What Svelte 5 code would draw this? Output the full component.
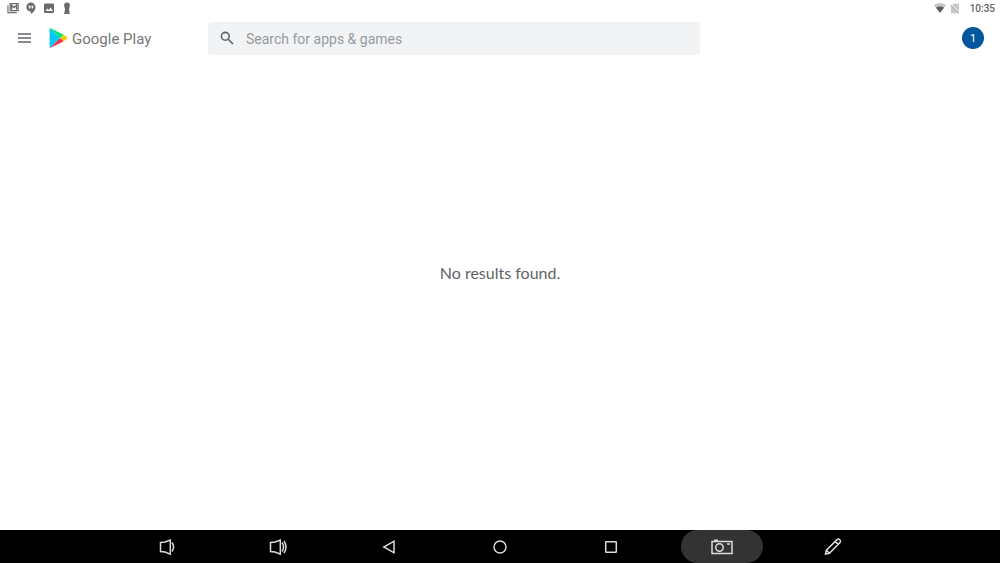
<script>
  let query = $state('');
</script>

<div class="screen">
  <div class="status">
    <div class="group notices">
      <svg width="12" height="12" viewBox="0 0 13 12" fill="none" stroke="#6b6b6b">
        <path d="M1 3v8h9.500" stroke-width="1.200" />
        <path d="M3.400 1.300h8.600v7.600H3.400z" stroke-width="1.300" />
        <path d="M5 8V3l2.700 2.500L10.400 3v5" stroke-width="1.500" />
      </svg>
      <svg width="10" height="12" viewBox="0 0 10 12">
        <path d="M5 .6a4.500 4.500 0 0 0-.3 9V12C7.600 10.500 9.500 8 9.500 5A4.500 4.500 0 0 0 5 .6z" fill="#6b6b6b" />
        <path d="M2.700 3.700h1.900v1.900l-.8 1.200H3l.5-1.200h-.8zM5.400 3.700h1.900v1.900l-.8 1.200h-.8l.5-1.200h-.8z" fill="#fff" />
      </svg>
      <svg width="12" height="12" viewBox="0 0 12 12">
        <rect x="1" y="1.500" width="10" height="9.500" rx="1" fill="#6b6b6b" />
        <path d="M2.500 9 4.400 6.500l1.300 1.600L7.500 5.600 10 9z" fill="#fff" />
      </svg>
      <svg width="10" height="12" viewBox="0 0 10 12" fill="#6b6b6b">
        <circle cx="5" cy="3.500" r="2.900" />
        <path d="M2.500 5.500h5L7 7l.8 5H2.200L3 7z" />
      </svg>
    </div>
    <div class="group">
      <svg width="12" height="10" viewBox="0 0 12 10">
        <path d="M0 2.200C3.500-.4 8.500-.4 12 2.200L6 9.800z" fill="#c4c4c4" />
        <path d="M2 4.700C4.400 3 7.600 3 10 4.700L6 9.800z" fill="#5c5c5c" />
      </svg>
      <svg width="10" height="11" viewBox="0 0 10 11">
        <path d="M3.500.8H9v9.500H1V3.300z" fill="#c6c6c6" />
        <path d="M1.600 1.600 9.800 9.800" stroke="#fff" />
        <path d="M.6 1.800 9 10.400" stroke="#a5a5a5" />
      </svg>
      <time>10:35</time>
    </div>
  </div>

  <header>
    <div class="brand">
      <button class="menu" aria-label="Menu">
        <svg width="13" height="10" viewBox="0 0 13 10" stroke="#5f6368" stroke-width="1.400">
          <path d="M0 1h13M0 5h13M0 9h13" />
        </svg>
      </button>
      <a href="#home" class="logo">
        <svg width="19" height="22" viewBox="0 0 19 22">
          <path d="M.6.8v20.400L11.200 11z" fill="#00c8fa" />
          <path d="M.6.8 11.200 11l3.500-3.300z" fill="#00e676" />
          <path d="M.6 21.200 11.200 11l3.500 3.300z" fill="#f4314b" />
          <path d="M14.700 7.700 18 10.200q1 .8 0 1.600l-3.300 2.500L11.200 11z" fill="#ffc900" />
        </svg>
        <span>Google Play</span>
      </a>
    </div>
    <label class="search">
      <svg width="14" height="14" viewBox="0 0 14 14" fill="none" stroke="#5f6368" stroke-width="1.600">
        <circle cx="5.300" cy="5.300" r="3.900" />
        <path d="m8.200 8.200 4.800 4.800" />
      </svg>
      <input type="text" bind:value={query} placeholder="Search for apps &amp; games" aria-label="Search for apps &amp; games" />
    </label>
    <button class="account" aria-label="Account 1">1</button>
  </header>

  <main><p>No results found.</p></main>

  <nav>
    <button aria-label="Volume down">
      <svg width="24" height="20" viewBox="0 0 24 20">
        <path d="M5.500 5.500 10 5l5.300-1.900v14L10 15l-4.500-.5z" />
        <path d="M17 5.500q3.200 4.500 0 9" />
      </svg>
    </button>
    <button aria-label="Volume up">
      <svg width="24" height="20" viewBox="0 0 24 20">
        <path d="M4.500 5.500 9 5l5.300-1.900v14L9 15l-4.500-.5z" />
        <path d="M16 5.500q3.200 4.500 0 9M18 4q4 6 0 12" />
      </svg>
    </button>
    <button aria-label="Back">
      <svg width="24" height="20" viewBox="0 0 24 20"><path d="M17 4.200v11.600L6.800 10z" /></svg>
    </button>
    <button aria-label="Home">
      <svg width="24" height="20" viewBox="0 0 24 20"><circle cx="12" cy="10" r="6" /></svg>
    </button>
    <button aria-label="Recent apps">
      <svg width="24" height="20" viewBox="0 0 24 20"><rect x="6.700" y="4.700" width="10.600" height="10.600" rx=".5" /></svg>
    </button>
    <button aria-label="Screenshot" class="active">
      <svg width="24" height="20" viewBox="0 0 24 20">
        <path d="M2 4.500h20v12H2zM4 3.300h4M17 7h3" />
        <circle cx="9.500" cy="10.500" r="3.700" />
      </svg>
    </button>
    <button aria-label="Draw">
      <svg width="24" height="20" viewBox="0 0 24 20">
        <path d="m4.500 17 .9-3.800L16 2.600q1.400-1.100 2.800.2t.2 2.800L8.400 16.200zM14.200 4.400l3 3M5.400 13.200l3 3" />
      </svg>
    </button>
  </nav>
</div>

<style>
  :global(body) {
    margin: 0;
    background: #fff;
  }
  .screen {
    min-height: 100vh;
    display: flex;
    flex-direction: column;
    font-family: Roboto, sans-serif;
    color: #5f6368;
  }
  button {
    border: 0;
    padding: 0;
    background: none;
    font: inherit;
    color: inherit;
    display: flex;
    align-items: center;
    justify-content: center;
    cursor: pointer;
  }
  svg {
    flex: none;
    display: block;
  }
  .status {
    height: 16px;
    padding: 0 5px 0 7px;
    display: flex;
    align-items: center;
    justify-content: space-between;
  }
  .group {
    display: flex;
    align-items: center;
    gap: 4px;
  }
  .notices {
    gap: 7px;
  }
  time {
    margin-left: 6px;
    padding-top: 2px;
    font: 500 10px/16px Roboto, sans-serif;
    color: #636363;
  }
  header {
    height: 44px;
    padding-right: 16px;
    display: flex;
    align-items: center;
  }
  .brand {
    width: 208px;
    flex: none;
    display: flex;
    align-items: center;
  }
  .menu {
    width: 49px;
    height: 32px;
  }
  .logo {
    display: flex;
    align-items: center;
    gap: 4px;
    color: #777;
    text-decoration: none;
    font: 15px/22px Roboto, sans-serif;
  }
  .logo span,
  input {
    padding: 2px 0 0;
  }
  .search {
    flex: 1;
    max-width: 492px;
    height: 33px;
    box-sizing: border-box;
    padding: 0 12px;
    display: flex;
    align-items: center;
    gap: 12px;
    border-radius: 4px;
    background: #f1f3f4;
  }
  input {
    flex: 1;
    min-width: 0;
    border: 0;
    outline: 0;
    background: none;
    color: #5f6368;
    font: 14px/20px Roboto, sans-serif;
  }
  input::placeholder {
    color: #979b9f;
    opacity: 1;
  }
  .account {
    width: 22px;
    height: 22px;
    margin-left: auto;
    padding-top: 2px;
    border-radius: 50%;
    background: #01579b;
    color: #fff;
    font: 11px/20px Roboto, sans-serif;
  }
  main {
    flex: 1;
    padding-bottom: 44px;
    display: flex;
    align-items: center;
    justify-content: center;
  }
  p {
    margin: 0;
    font: 16px/24px Lato, sans-serif;
  }
  nav {
    height: 33px;
    padding: 0 calc(100% / 9);
    display: grid;
    grid-template-columns: repeat(7, 1fr);
    justify-items: center;
    background: #000;
  }
  nav button {
    width: 82px;
  }
  nav svg {
    fill: none;
    stroke: #dcdcdc;
    stroke-width: 1.500;
  }
  .active {
    border-radius: 17px;
    background: #333;
  }
</style>
